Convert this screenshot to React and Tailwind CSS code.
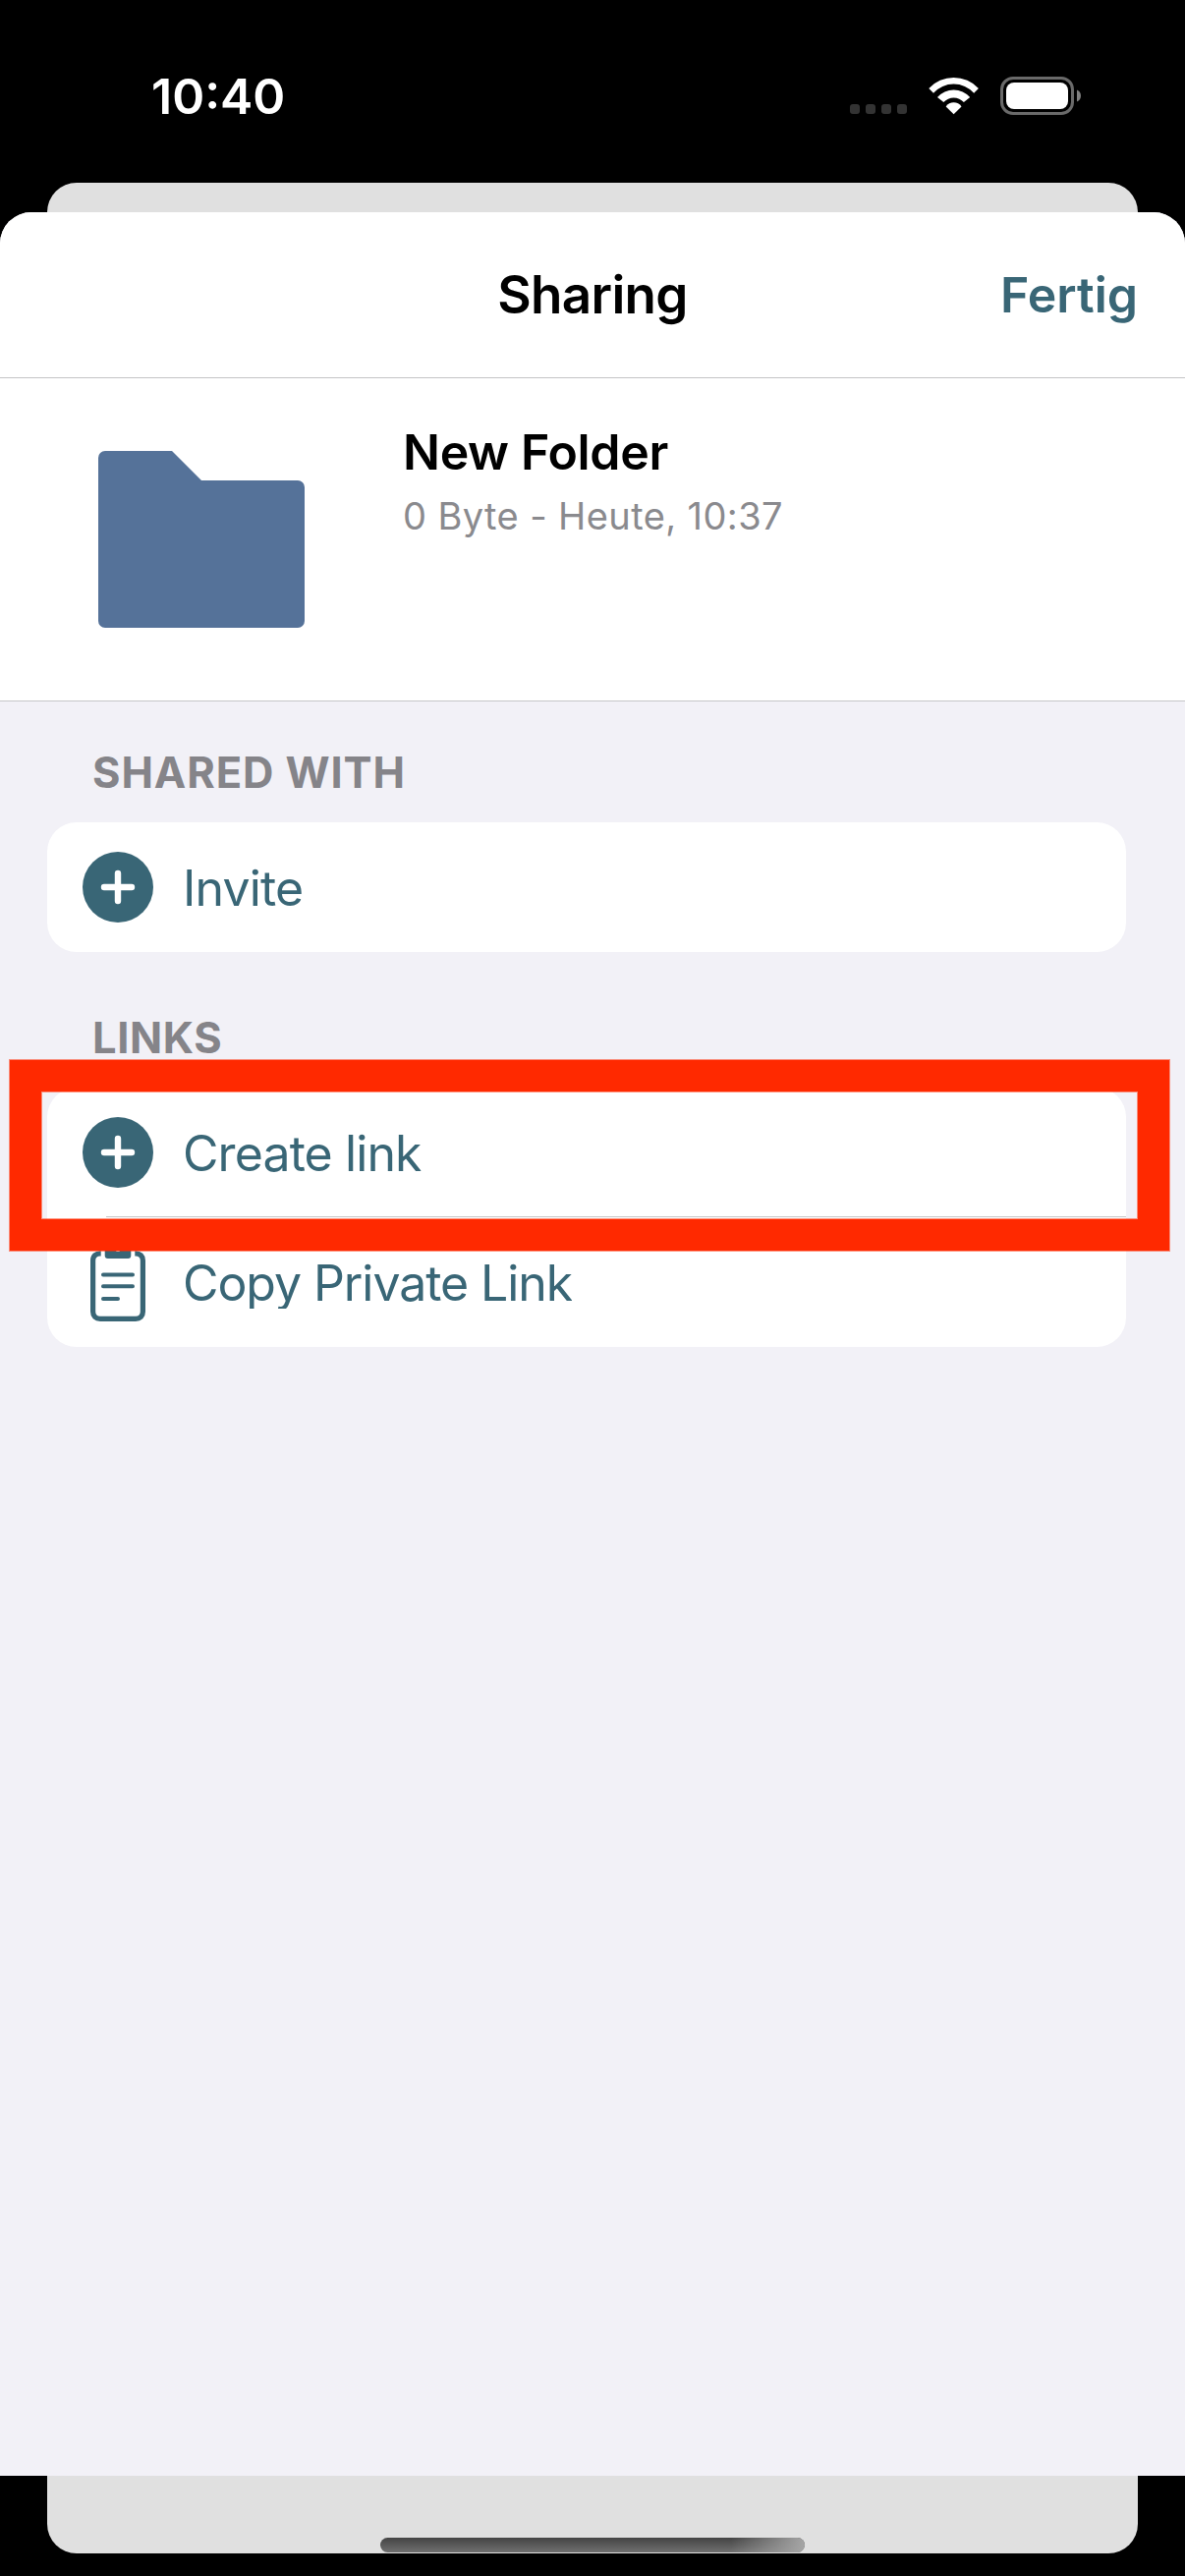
import React from "react";

function StatusIcons() {
  return (
    <svg className="mt-[70px] mr-[98px] h-[50px] w-[244px]" viewBox="864 70 244 50">
      <g fill="#333333">
        <rect x="865" y="106" width="10" height="10" rx="3" />
        <rect x="881" y="106" width="10" height="10" rx="3" />
        <rect x="897" y="106" width="10" height="10" rx="3" />
        <rect x="913" y="106" width="10" height="10" rx="3" />
      </g>
      <g fill="#ffffff">
        <path d="M945.3 90A34.6 34.6 0 0 1 995.9 90L991.2 94.7A27.8 27.8 0 0 0 950 94.7Z" />
        <path d="M954 99A22.2 22.2 0 0 1 987.2 99L980.9 104A14.2 14.2 0 0 0 960.3 104Z" />
        <path d="M962.7 108.4A9.5 9.5 0 0 1 978.5 108.4L970.6 116.2Z" />
      </g>
      <rect x="1019.5" y="79.5" width="72" height="36" rx="11.5" fill="none" stroke="#6a6a6a" strokeWidth="3" />
      <rect x="1024" y="84" width="63" height="27" rx="8" fill="#ffffff" />
      <path d="M1096 91.5C1098.5 92.5 1100 94.8 1100 97.5S1098.5 102.5 1096 103.5Z" fill="#808080" />
    </svg>
  );
}

function FolderIcon() {
  return (
    <svg className="h-[180px] w-[210px] shrink-0" viewBox="0 0 210 180">
      <path
        d="M7 0H75L105 30H203A7 7 0 0 1 210 37V173A7 7 0 0 1 203 180H7A7 7 0 0 1 0 173V7A7 7 0 0 1 7 0Z"
        fill="#557299"
      />
    </svg>
  );
}

function PlusIcon() {
  return (
    <svg className="size-[72px] shrink-0" viewBox="0 0 72 72">
      <circle cx="36" cy="36" r="36" fill="#396676" />
      <path d="M22 36H50M36 22V50" stroke="#ffffff" strokeWidth="6.4" strokeLinecap="round" />
    </svg>
  );
}

function ClipboardIcon() {
  return (
    <svg className="h-[84px] w-[72px] shrink-0" viewBox="84 1263 72 84" fill="none" stroke="#396676">
      <path
        d="M102.7 1275.8H102C97.5 1275.8 94.6 1278.4 94.6 1283V1335C94.6 1339.8 97.4 1342.4 102 1342.4H138C142.6 1342.4 145.4 1339.8 145.4 1335V1283C145.4 1278.4 142.5 1275.8 138 1275.8H137.3"
        strokeWidth="5.2"
      />
      <path
        d="M106.7 1272.5C106.7 1271 107.7 1270 109.2 1270H130.8C132.3 1270 133.3 1271 133.3 1272.5V1278C133.3 1280 132.3 1281 130.3 1281H109.7C107.7 1281 106.7 1280 106.7 1278Z"
        fill="#396676"
        stroke="none"
      />
      <circle cx="120" cy="1271.5" r="2.5" fill="#ffffff" stroke="none" />
      <path d="M105 1297.4H135M105 1309.3H135M105 1321.9H120" strokeWidth="4" strokeLinecap="round" />
    </svg>
  );
}

function Row({ icon, label, spacing, divided }) {
  return (
    <div className="relative flex h-[132px] items-center pl-9">
      {icon}
      <span className={`ml-[30px] pt-0.5 text-[50px] leading-[60px] whitespace-nowrap text-[#396676] [clip-path:inset(0_0_4px_0)] ${spacing}`}>
        {label}
      </span>
      {divided && <div className="absolute right-0 bottom-0 left-[60px] h-px bg-[#c5c5c7]" />}
    </div>
  );
}

export default function App() {
  return (
    <div className="flex h-[2622px] w-[1206px] flex-col overflow-hidden bg-black font-['Inter',sans-serif]">
      <header className="flex h-[186px] shrink-0 items-start justify-between">
        <span className="mt-[68px] ml-[154px] text-[50px] leading-[60px] font-semibold text-white">10:40</span>
        <StatusIcons />
      </header>

      <div className="mx-12 h-[30px] shrink-0 rounded-t-[30px] bg-[#e0e0e0]" />

      <main className="flex h-[2304px] shrink-0 flex-col overflow-hidden rounded-t-[32px] bg-[#f2f1f7]">
        <div className="grid h-[169px] shrink-0 grid-cols-[1fr_auto_1fr] border-b border-[#c4c4c6] bg-white">
          <span />
          <h1 className="mt-[52px] text-[53px] leading-[64px] font-semibold tracking-[-0.7px] text-black">Sharing</h1>
          <span className="mt-[54px] mr-[48px] justify-self-end text-[50px] leading-[60px] font-semibold text-[#396676]">Fertig</span>
        </div>

        <div className="flex h-[329px] shrink-0 items-start border-b border-[#c6c6c8] bg-white pl-[100px]">
          <div className="mt-[74px]">
            <FolderIcon />
          </div>
          <div className="mt-[45px] ml-[100px] flex flex-col gap-3 whitespace-nowrap">
            <h2 className="text-[50px] leading-[60px] font-semibold tracking-[-0.33px] text-black">New Folder</h2>
            <p className="text-[38px] leading-[46px] tracking-[0.4px] text-[#8a8a8e]">0 Byte - Heute, 10:37</p>
          </div>
        </div>

        <section className="mt-[46px] mr-[60px] ml-12">
          <h3 className="mb-[25px] pl-[46px] text-[43.5px] leading-[52px] font-bold tracking-[0.9px] text-[#858489]">SHARED WITH</h3>
          <div className="rounded-[30px] bg-white">
            <Row icon={<PlusIcon />} label="Invite" spacing="tracking-[-0.86px]" />
          </div>
        </section>

        <section className="mt-[61px] mr-[60px] ml-12">
          <h3 className="mb-[25px] pl-[46px] text-[43.5px] leading-[52px] font-bold tracking-[0.6px] text-[#858489]">LINKS</h3>
          <div className="relative rounded-[30px] bg-white">
            <Row icon={<PlusIcon />} label="Create link" spacing="tracking-[-0.9px]" divided />
            <Row icon={<ClipboardIcon />} label="Copy Private Link" spacing="tracking-[-1.07px]" />
            <div className="absolute -top-[28px] -left-[38px] h-[194px] w-[1180px] border-[32px] border-[#ff2900] shadow-[0_0_0_1px_rgba(255,41,0,0.5),inset_0_0_0_1px_rgba(255,41,0,0.5)]" />
          </div>
        </section>
      </main>

      <div className="mx-12 flex h-[79px] shrink-0 items-end justify-center rounded-b-[30px] bg-[#e0e0e0] pb-px">
        <div className="h-[15px] w-[432px] overflow-hidden rounded-full bg-linear-to-b from-[#444444] to-[#707070]">
          <div className="ml-auto h-full w-[75px] bg-linear-to-r from-transparent to-[#a6a6a6]" />
        </div>
      </div>
    </div>
  );
}
